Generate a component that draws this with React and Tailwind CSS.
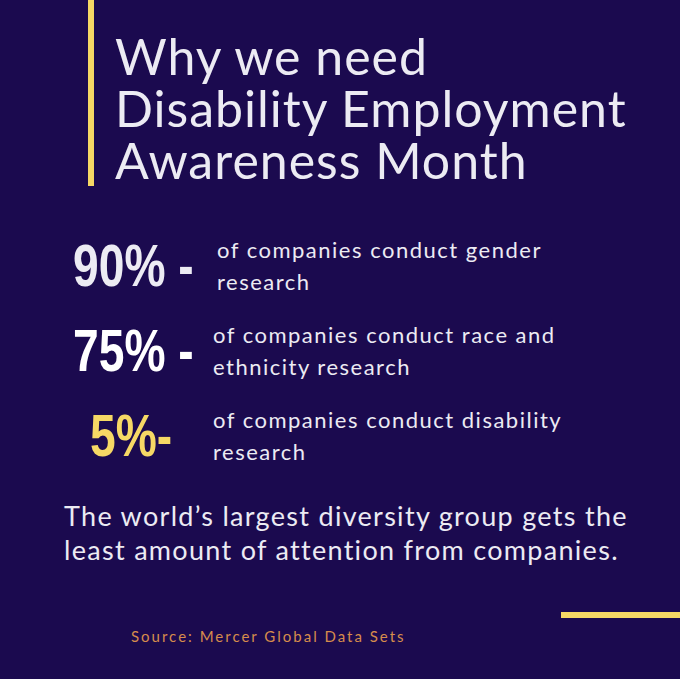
const BASE_FONT = { fontFamily: "Lato, 'Noto Sans', sans-serif" };
const NUM_FONT = { fontFamily: "'Liberation Sans', Arial, sans-serif" };

const stats = [
  { value: "90% -", lines: ["of companies conduct gender", "research"], color: "text-[#ecebf3]", numPad: "pl-0", textPad: "pl-[4px]" },
  { value: "75% -", lines: ["of companies conduct race and", "ethnicity research"], color: "text-white", numPad: "pl-0", textPad: "pl-0" },
  { value: "5%-", lines: ["of companies conduct disability", "research"], color: "text-[#f6d865]", numPad: "pl-[17px]", textPad: "pl-0" },
];

export default function App() {
  return (
    <div className="w-[680px] h-[679px] bg-[#1b0a4f] overflow-hidden flex flex-col" style={BASE_FONT}>
      {/* Header with yellow bar */}
      <div className="flex">
        <div className="ml-[88px] w-[6px] h-[186px] bg-[#f6d865]" />
        <h1 className="pl-[21px] pt-[30px] text-[50px] leading-[52px] tracking-[1px] text-[#ecebf3] font-normal">
          Why we need
          <br />
          Disability Employment
          <br />
          Awareness Month
        </h1>
      </div>

      {/* Stats */}
      <div className="flex flex-col gap-[21px] mt-[48px] pl-[73px]">
        {stats.map((s) => (
          <div key={s.value} className="flex items-center h-[64px]">
            <div className={`w-[140px] shrink-0 ${s.numPad}`}>
              <span
                className={`inline-block whitespace-nowrap origin-left scale-x-[0.77] ${s.color} text-[60px] leading-none font-bold`}
                style={NUM_FONT}
              >
                {s.value}
              </span>
            </div>
            <div className={`${s.textPad} text-[22px] leading-[32px] tracking-[1.5px] text-[#ecebf3]`}>
              {s.lines.map((l) => (
                <div key={l} className="whitespace-nowrap">{l}</div>
              ))}
            </div>
          </div>
        ))}
      </div>

      {/* Closing sentence */}
      <p className="mt-[31px] pl-[64px] text-[27px] leading-[34px] tracking-[1.3px] text-[#ecebf3] whitespace-nowrap">
        The world’s largest diversity group gets the
        <br />
        least amount of attention from companies.
      </p>

      {/* Footer */}
      <div className="flex justify-end mt-[45px]">
        <div className="w-[119px] h-[6px] bg-[#f6d865]" />
      </div>
      <div className="pl-[131px] mt-[8px] text-[15px] leading-[20px] tracking-[2px] text-[#d68c4c]">
        Source: Mercer Global Data Sets
      </div>
    </div>
  );
}
